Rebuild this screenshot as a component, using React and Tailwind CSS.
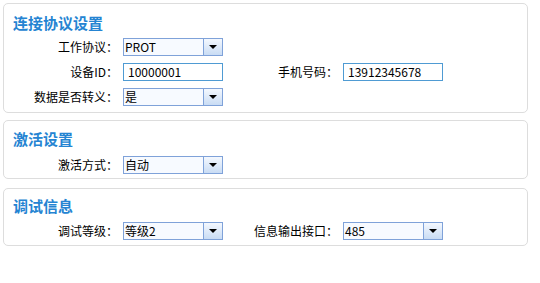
import React from "react";

const font = { fontFamily: '"Noto Sans CJK SC", "Liberation Sans", sans-serif' };

const Select = ({ value }) => (
  <div className="flex h-[18px] w-[100px] items-stretch border border-[#7fa2d9] bg-[#f7faff]">
    <div className="flex-1 pl-[1px] text-[12px] leading-[16px] text-black overflow-hidden whitespace-nowrap">{value}</div>
    <div className="flex w-[19px] items-center justify-center border-l border-[#7fa2d9] bg-gradient-to-b from-[#f4f8fe] to-[#c9dcf4]">
      <div className="h-0 w-0 border-x-[4px] border-t-[4px] border-x-transparent border-t-black"></div>
    </div>
  </div>
);

const Input = ({ value }) => (
  <div className="h-[18px] w-[100px] border border-[#4f9bd3] bg-white pl-[4px] text-[12px] leading-[16px] text-black">
    {value}
  </div>
);

const Label = ({ children, w }) => (
  <div className={`${w} text-right text-[12px] leading-[18px] text-black whitespace-nowrap`}>{children}</div>
);

const Panel = ({ title, children, className }) => (
  <div className={`w-[525px] rounded-[5px] border border-[#dddddd] bg-white ${className}`}>
    <div className="pl-[9px] text-[15px] font-bold leading-[20px] text-[#2584d2]">{title}</div>
    {children}
  </div>
);

export default function App() {
  return (
    <div className="h-[283px] w-[540px] bg-white pl-[3px] pt-[3px]" style={font}>
      <Panel title="连接协议设置" className="pt-[9px] pb-[6px]">
        <div className="mt-[5px] flex flex-col gap-[7px]">
          <div className="flex items-center">
            <Label w="w-[114px]">工作协议：</Label>
            <div className="ml-[5px]"><Select value="PROT" /></div>
          </div>
          <div className="flex items-center">
            <Label w="w-[114px]">设备ID：</Label>
            <div className="ml-[5px]"><Input value="10000001" /></div>
            <Label w="w-[115px]">手机号码：</Label>
            <div className="ml-[5px]"><Input value="13912345678" /></div>
          </div>
          <div className="flex items-center">
            <Label w="w-[114px]">数据是否转义：</Label>
            <div className="ml-[5px]"><Select value="是" /></div>
          </div>
        </div>
      </Panel>
      <Panel title="激活设置" className="mt-[7px] pt-[8px] pb-[4px]">
        <div className="mt-[7px] flex items-center">
          <Label w="w-[114px]">激活方式：</Label>
          <div className="ml-[5px]"><Select value="自动" /></div>
        </div>
      </Panel>
      <Panel title="调试信息" className="mt-[9px] pt-[7px] pb-[5px]">
        <div className="mt-[6px] flex items-center">
          <Label w="w-[114px]">调试等级：</Label>
          <div className="ml-[5px]"><Select value="等级2" /></div>
          <Label w="w-[115px]">信息输出接口：</Label>
          <div className="ml-[5px]"><Select value="485" /></div>
        </div>
      </Panel>
    </div>
  );
}
